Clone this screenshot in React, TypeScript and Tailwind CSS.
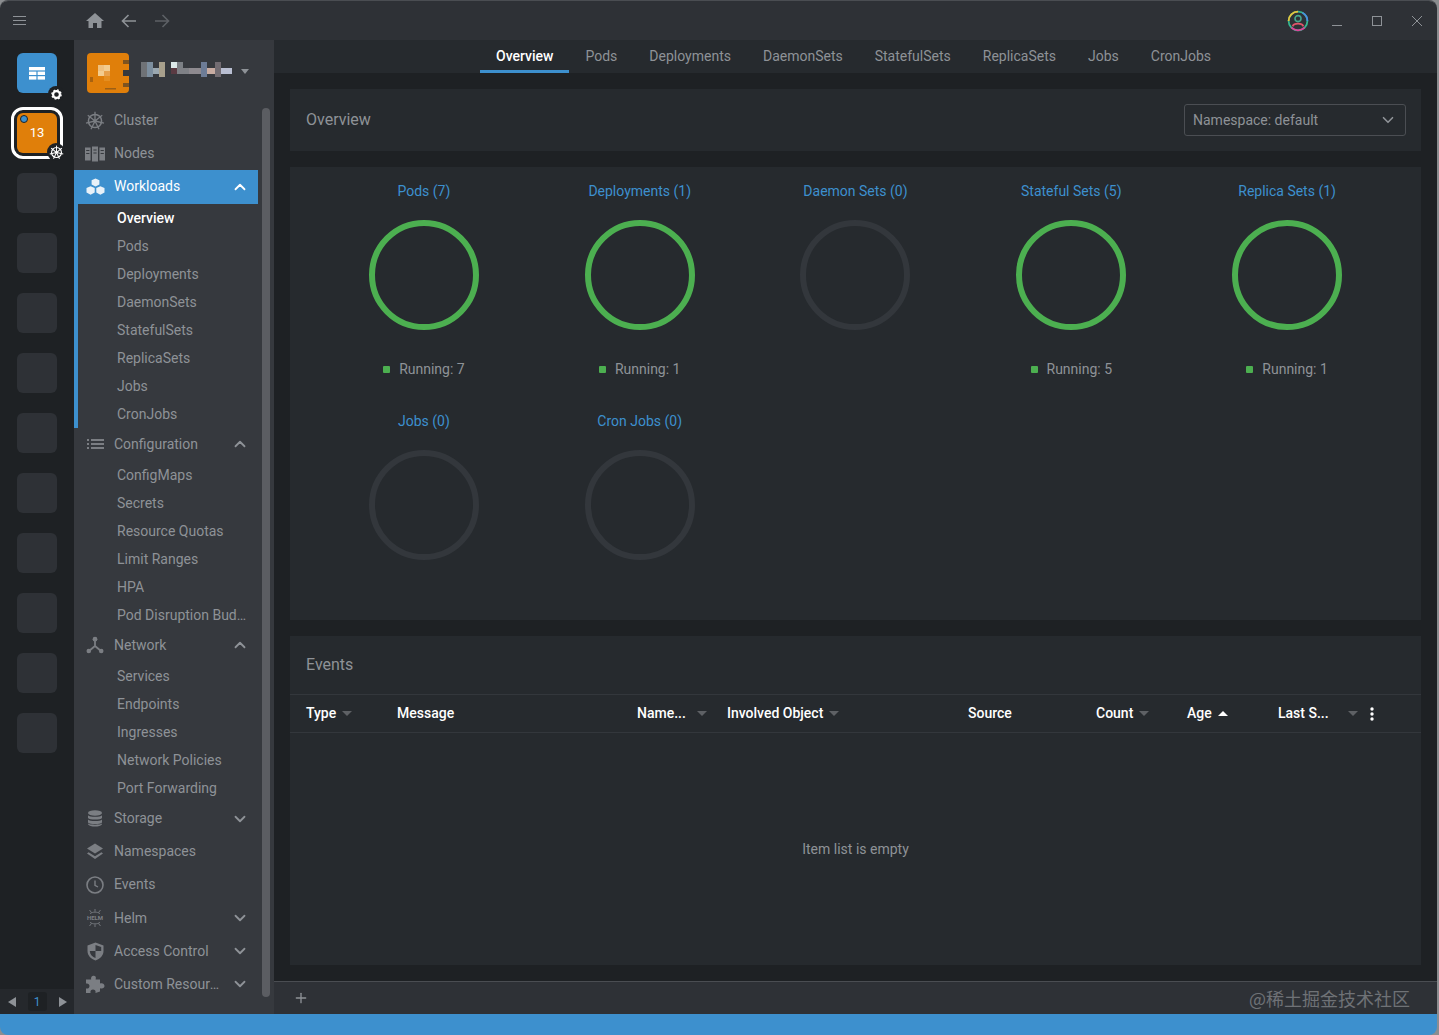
import { ChevronDown, ChevronUp, Plus } from "lucide-react";
import type { ReactNode } from "react";

const tabs = ["Overview", "Pods", "Deployments", "DaemonSets", "StatefulSets", "ReplicaSets", "Jobs", "CronJobs"];

const charts = [
  { title: "Pods (7)", running: 7 },
  { title: "Deployments (1)", running: 1 },
  { title: "Daemon Sets (0)", running: 0 },
  { title: "Stateful Sets (5)", running: 5 },
  { title: "Replica Sets (1)", running: 1 },
  { title: "Jobs (0)", running: 0 },
  { title: "Cron Jobs (0)", running: 0 },
];

const workloads = ["Overview", "Pods", "Deployments", "DaemonSets", "StatefulSets", "ReplicaSets", "Jobs", "CronJobs"];
const config = ["ConfigMaps", "Secrets", "Resource Quotas", "Limit Ranges", "HPA", "Pod Disruption Budgets"];
const network = ["Services", "Endpoints", "Ingresses", "Network Policies", "Port Forwarding"];

const columns = [
  { label: "Type", width: "w-[91px]", sort: "down" },
  { label: "Message", width: "w-[240px]" },
  { label: "Name...", width: "w-[90px]", sort: "down", wide: true },
  { label: "Involved Object", width: "w-[241px]", sort: "down" },
  { label: "Source", width: "w-[128px]" },
  { label: "Count", width: "w-[91px]", sort: "down" },
  { label: "Age", width: "w-[91px]", sort: "up" },
  { label: "Last S...", width: "w-[100px]", sort: "down", wide: true },
];

function HelmWheel({ size = 20, color = "#7b7e83" }: { size?: number; color?: string }) {
  const spokes = [0, 51.4, 102.8, 154.2, 205.7, 257.1, 308.5];
  return (
    <svg width={size} height={size} viewBox="0 0 20 20" fill="none" stroke={color}>
      <circle cx="10" cy="10" r="6.6" strokeWidth="1.5" />
      <circle cx="10" cy="10" r="1.7" fill={color} stroke="none" />
      {spokes.map((a) => (
        <line key={a} x1="10" y1="10" x2="10" y2="0.8" strokeWidth="1.3" transform={`rotate(${a} 10 10)`} />
      ))}
    </svg>
  );
}

function NodesIcon() {
  return (
    <svg width="20" height="16" viewBox="0 0 20 16" fill="#7b7e83">
      <rect x="0" y="1.5" width="5.6" height="13" />
      <rect x="7" y="0.5" width="6" height="15" />
      <rect x="14.4" y="1.5" width="5.6" height="13" />
      <g fill="#36393e">
        <rect x="1.2" y="4" width="3.2" height="1" />
        <rect x="1.2" y="7" width="3.2" height="1" />
        <rect x="8.4" y="3.5" width="3.2" height="1" />
        <rect x="8.4" y="6.5" width="3.2" height="1" />
        <rect x="15.6" y="4" width="3.2" height="1" />
        <rect x="15.6" y="7" width="3.2" height="1" />
      </g>
    </svg>
  );
}

function CubesIcon() {
  return (
    <svg width="19" height="18" viewBox="0 0 19 18" fill="#e8f1f8">
      <path d="M9.5 0.5 13.4 2.2 13.4 6.6 9.5 8.4 5.6 6.6 5.6 2.2Z" />
      <path d="M4.6 8.2 8.7 10 8.7 14.6 4.6 16.8 0.5 14.6 0.5 10Z" />
      <path d="M14.4 8.2 18.5 10 18.5 14.6 14.4 16.8 10.3 14.6 10.3 10Z" />
    </svg>
  );
}

function ListIcon() {
  return (
    <svg width="17" height="10" viewBox="0 0 17 10" fill="#7b7e83">
      <rect x="0" y="0" width="2" height="2" />
      <rect x="0" y="4" width="2" height="2" />
      <rect x="0" y="8" width="2" height="2" />
      <rect x="4" y="0" width="13" height="2" />
      <rect x="4" y="4" width="13" height="2" />
      <rect x="4" y="8" width="13" height="2" />
    </svg>
  );
}

function NetworkIcon() {
  return (
    <svg width="18" height="18" viewBox="0 0 18 18" fill="#7b7e83" stroke="#7b7e83">
      <circle cx="9" cy="3.2" r="2.4" stroke="none" />
      <circle cx="2.8" cy="15" r="2.3" stroke="none" />
      <circle cx="15.2" cy="15" r="2.3" stroke="none" />
      <path d="M9 4 9 10 3 15M9 10 15 15" strokeWidth="1.8" fill="none" />
    </svg>
  );
}

function StorageIcon() {
  return (
    <svg width="16" height="17" viewBox="0 0 16 17" fill="#7b7e83">
      <ellipse cx="8" cy="3" rx="7" ry="2.7" />
      <path d="M1 5.2C2.5 7.2 13.5 7.2 15 5.2V8C13.5 10 2.5 10 1 8Z" />
      <path d="M1 9.6C2.5 11.6 13.5 11.6 15 9.6V12.4C13.5 14.4 2.5 14.4 1 12.4Z" />
      <path d="M1 13.6C2.5 15.2 13.5 15.2 15 13.6V14.2C13.5 17.4 2.5 17.4 1 14.2Z" />
    </svg>
  );
}

function LayersIcon() {
  return (
    <svg width="18" height="17" viewBox="0 0 18 17" fill="#7b7e83">
      <path d="M9 0.5 17 5.5 9 10.5 1 5.5Z" />
      <path d="M2.6 9.2 9 13.2 15.4 9.2 17 10.5 9 16 1 10.5Z" />
    </svg>
  );
}

function ClockIcon() {
  return (
    <svg width="18" height="18" viewBox="0 0 18 18" fill="none" stroke="#7b7e83">
      <circle cx="9" cy="9" r="8" strokeWidth="1.6" />
      <path d="M9 4.5V9.4L12 11" strokeWidth="1.4" />
    </svg>
  );
}

function HelmIcon() {
  return (
    <svg width="20" height="20" viewBox="0 0 20 20" fill="none" stroke="#7b7e83" strokeWidth="0.9">
      <path d="M4.5 2 6.5 4.5M10 1V3.6M15.5 2 13.5 4.5M5 5.6C8 3.6 12 3.6 15 5.6" />
      <path d="M4.5 18 6.5 15.5M10 19V16.4M15.5 18 13.5 15.5M5 14.4C8 16.4 12 16.4 15 14.4" />
      <text x="10" y="12" textAnchor="middle" fontSize="6" fontWeight="700" fontFamily="Roboto, sans-serif" fill="#7b7e83" stroke="none">
        HELM
      </text>
    </svg>
  );
}

function ShieldIcon() {
  return (
    <svg width="17" height="19" viewBox="0 0 17 19" fill="#7b7e83">
      <path d="M8.5 0.5 16.5 3.5V9C16.5 13.5 13 17 8.5 18.5 4 17 0.5 13.5 0.5 9V3.5ZM8.5 3V9H14.2V4.9ZM8.5 9H2.8C3 12.4 5.4 15 8.5 16Z" fillRule="evenodd" />
    </svg>
  );
}

function PuzzleIcon() {
  return (
    <svg width="20" height="19" viewBox="0 0 20 19" fill="#7b7e83">
      <path d="M7.5 1C9.5 0 11.4 1.4 10.8 3.6L10.6 4.4H15V8.6C17.4 7.6 19.5 9 19.5 11S17.4 14.2 15 13.2V16.5L10.5 18C11 15.6 9.5 14.6 8 14.6S5 15.6 5.5 18H1V13.5C3 14 4.5 12.8 4.5 11S3 8 1 8.5V4.4H6.2C5.8 3 6.2 1.6 7.5 1Z" />
    </svg>
  );
}

function TopRow({
  icon,
  label,
  open,
  active,
}: {
  icon: ReactNode;
  label: string;
  open?: boolean;
  active?: boolean;
}) {
  return (
    <div className={`flex h-[33.2px] items-center ${active ? "bg-[#3d90ce] text-white" : "text-[#8e9297]"}`}>
      <div className="flex w-[40px] shrink-0 justify-center pl-[2px]">{icon}</div>
      <span className="min-w-0 flex-1 truncate">{label}</span>
      {open === undefined ? null : open ? (
        <ChevronUp size={18} strokeWidth={2.4} className={`mr-[9px] ml-[6px] shrink-0 ${active ? "text-white" : "text-[#8e9297]"}`} />
      ) : (
        <ChevronDown size={18} strokeWidth={2.4} className="mr-[9px] ml-[6px] shrink-0 text-[#8e9297]" />
      )}
    </div>
  );
}

function SubRow({ label, active }: { label: string; active?: boolean }) {
  return (
    <div className={`h-[28px] truncate pr-[10px] pl-[43px] leading-[28px] ${active ? "font-medium text-white" : "text-[#8e9297]"}`}>
      {label}
    </div>
  );
}

function Sidebar() {
  return (
    <aside className="relative flex w-[200px] shrink-0 flex-col bg-[#36393e] text-[14px]">
      <div className="flex h-[64px] shrink-0 items-start pt-[13px] pl-[13px]">
        <svg width="42" height="40" viewBox="0 0 42 40">
          <rect width="42" height="40" rx="4" fill="#e07f0a" />
          <rect x="11" y="12" width="6" height="6" fill="#efc07e" />
          <rect x="17" y="12" width="6" height="6" fill="#f3cc8e" />
          <rect x="11" y="18" width="6" height="5" fill="#f3cc8e" />
          <rect x="17" y="18" width="6" height="5" fill="#e8a04a" />
          <rect x="17" y="23" width="6" height="5" fill="#e58e20" />
          <rect x="3" y="24" width="3" height="5" fill="#a9620f" />
          <rect x="36" y="7" width="6" height="4" fill="#7d5320" />
          <rect x="36" y="17" width="6" height="6" fill="#36393e" />
          <rect x="36" y="30" width="6" height="4" fill="#7d5320" />
          <rect x="18" y="35" width="11" height="1.5" fill="#9c5f15" />
        </svg>
        <svg width="94" height="20" viewBox="0 0 94 20" className="mt-[9px] ml-[12px]">
          <rect x="0" y="0" width="6" height="15" fill="#6f7276" />
          <rect x="6" y="0" width="6" height="15" fill="#7c8e9e" />
          <rect x="12" y="6" width="6" height="6" fill="#9aa7b0" />
          <rect x="18" y="0" width="6" height="15" fill="#a8a08c" />
          <rect x="30" y="0" width="6" height="6" fill="#dce9e9" />
          <rect x="36" y="0" width="6" height="6" fill="#7c8085" />
          <rect x="30" y="6" width="6" height="6" fill="#5a3a42" />
          <rect x="36" y="6" width="12" height="6" fill="#7f8186" />
          <rect x="48" y="6" width="12" height="6" fill="#8e8a8f" />
          <rect x="60" y="0" width="6" height="15" fill="#6d7c96" />
          <rect x="66" y="6" width="8" height="6" fill="#c8aca2" />
          <rect x="74" y="0" width="6" height="15" fill="#726c72" />
          <rect x="80" y="6" width="11" height="6" fill="#b9bfd2" />
        </svg>
        <div className="mt-[16px] ml-[6px] h-0 w-0 border-x-[4.5px] border-t-[5px] border-x-transparent border-t-[#8e9297]" />
      </div>

      <div className="w-[184px] min-h-0 flex-1 overflow-hidden">
        <TopRow icon={<HelmWheel />} label="Cluster" />
        <TopRow icon={<NodesIcon />} label="Nodes" />
        <TopRow icon={<CubesIcon />} label="Workloads" open active />
        <div className="border-l-4 border-[#3d90ce] -ml-0">
          {workloads.map((w, i) => (
            <div key={w} className="-ml-[4px]">
              <SubRow label={w} active={i === 0} />
            </div>
          ))}
        </div>
        <TopRow icon={<ListIcon />} label="Configuration" open />
        {config.map((c) => (
          <SubRow key={c} label={c} />
        ))}
        <TopRow icon={<NetworkIcon />} label="Network" open />
        {network.map((n) => (
          <SubRow key={n} label={n} />
        ))}
        <TopRow icon={<StorageIcon />} label="Storage" open={false} />
        <TopRow icon={<LayersIcon />} label="Namespaces" />
        <TopRow icon={<ClockIcon />} label="Events" />
        <TopRow icon={<HelmIcon />} label="Helm" open={false} />
        <TopRow icon={<ShieldIcon />} label="Access Control" open={false} />
        <TopRow icon={<PuzzleIcon />} label="Custom Resources" open={false} />
      </div>

      {/* scrollbar thumb */}
      <div className="absolute top-[68px] right-[4px] bottom-[17px] w-[8px] rounded-[4px] bg-[#5b5d62]" />
    </aside>
  );
}

function Rail() {
  const empties = Array.from({ length: 10 }, (_, i) => i);
  return (
    <nav className="flex w-[74px] shrink-0 flex-col bg-[#1e2124]">
      <div className="flex min-h-0 flex-1 flex-col items-center gap-[20px] pt-[13px]">
        <div className="relative flex h-[40px] w-[40px] items-center justify-center rounded-[6px] bg-[#3d90ce]">
          <svg width="16" height="13" viewBox="0 0 16 13" fill="#fff">
            <rect width="16" height="3.4" />
            <rect y="4.6" width="7.4" height="3.4" />
            <rect x="8.6" y="4.6" width="7.4" height="3.4" />
            <rect y="9.2" width="7.4" height="3.4" />
            <rect x="8.6" y="9.2" width="7.4" height="3.4" />
          </svg>
          <div className="absolute -right-[7px] -bottom-[9px] flex h-[16px] w-[16px] items-center justify-center rounded-full bg-[#1e2124]">
            <svg width="11" height="11" viewBox="0 0 11 11">
              <circle cx="5.5" cy="5.5" r="3.4" fill="none" stroke="#fff" strokeWidth="2.2" />
              <circle cx="5.5" cy="5.5" r="4.6" fill="none" stroke="#fff" strokeWidth="1.4" strokeDasharray="1.8 1.8" />
            </svg>
          </div>
        </div>
        <div className="relative flex h-[40px] w-[40px] items-center justify-center rounded-[6px] bg-[#e07f0a] text-[13px] text-white outline-[3px] outline-offset-[3px] outline-white">
          <div className="absolute top-[2px] left-[3px] h-[8px] w-[8px] rounded-full border border-[#1e2124] bg-[#3d90ce]" />
          13
          <div className="absolute -right-[8px] -bottom-[8px] flex h-[18px] w-[18px] items-center justify-center rounded-full bg-[#1e2124]">
            <HelmWheel size={15} color="#ffffff" />
          </div>
        </div>
        {empties.map((i) => (
          <div key={i} className="h-[40px] w-[40px] shrink-0 rounded-[6px] bg-[#2e3136]" />
        ))}
      </div>
      <div className="flex h-[25px] shrink-0 items-center justify-center gap-[12px] bg-[#25282c]">
        <div className="h-0 w-0 border-y-[5px] border-r-[8px] border-y-transparent border-r-[#8e9297]" />
        <div className="flex h-[19px] w-[19px] items-center justify-center rounded-[3px] bg-[#1e2124] text-[12px] text-[#3d90ce]">1</div>
        <div className="h-0 w-0 border-y-[5px] border-l-[8px] border-y-transparent border-l-[#8e9297]" />
      </div>
    </nav>
  );
}

function Ring({ active }: { active: boolean }) {
  return (
    <svg width="110" height="110" viewBox="0 0 110 110" fill="none">
      <circle cx="55" cy="55" r="52" stroke={active ? "#4caf50" : "#33373c"} strokeWidth="6" />
    </svg>
  );
}

function Chart({ title, running }: { title: string; running: number }) {
  return (
    <div className="flex h-[230px] flex-col items-center pt-[14px]">
      <div className="leading-[20px] text-[#3d90ce]">{title}</div>
      <div className="mt-[19px]">
        <Ring active={running > 0} />
      </div>
      {running > 0 ? (
        <div className="mt-[29px] flex items-center gap-[9px] leading-[20px] text-[#8e9297]">
          <span className="h-[7px] w-[7px] rounded-[1px] bg-[#4caf50]" />
          Running: {running}
        </div>
      ) : null}
    </div>
  );
}

function SortArrow({ dir }: { dir?: string }) {
  if (dir === "up") {
    return <span className="ml-[6px] h-0 w-0 border-x-[5px] border-b-[5px] border-x-transparent border-b-white" />;
  }
  return <span className="ml-[6px] h-0 w-0 border-x-[5px] border-t-[5px] border-x-transparent border-t-[#5e6165]" />;
}

export default function App() {
  return (
    <div className="relative h-[1035px] w-[1439px] overflow-hidden bg-[#8b8d90] font-['Roboto',sans-serif] text-[14px]">
      <div className="flex h-[1035px] w-[1437px] flex-col overflow-hidden rounded-[8px] border-t border-[#4a4d52]">
        {/* title bar */}
        <header className="flex h-[39px] shrink-0 items-center bg-[#2e3136] text-[#8e9297]">
          <svg width="13" height="9" viewBox="0 0 13 9" stroke="#8e9297" className="ml-[13px]">
            <path d="M0 0.5H13M0 4.5H13M0 8.5H13" />
          </svg>
          <svg width="18" height="15" viewBox="0 0 18 15" fill="#8e9297" className="ml-[60px]">
            <path d="M9 0 18 8H15.5V15H11V10H7V15H2.5V8H0Z" />
          </svg>
          <svg width="16" height="14" viewBox="0 0 16 14" fill="none" stroke="#8e9297" strokeWidth="1.6" className="ml-[17px]">
            <path d="M15 7H1.5M7.5 1 1.5 7 7.5 13" />
          </svg>
          <svg width="16" height="14" viewBox="0 0 16 14" fill="none" stroke="#5d6065" strokeWidth="1.6" className="ml-[17px]">
            <path d="M1 7H14.5M8.5 1 14.5 7 8.5 13" />
          </svg>
          <div className="flex-1" />
          <svg width="22" height="22" viewBox="0 0 22 22" fill="none" className="mr-[23px]">
            <circle cx="11" cy="11" r="9.4" stroke="#35b58f" strokeWidth="1.8" />
            <path d="M11 1.6A9.4 9.4 0 0 0 1.6 11" stroke="#e8c33a" strokeWidth="1.8" />
            <path d="M4.4 17.6A9.4 9.4 0 0 0 17.6 17.6" stroke="#e0409a" strokeWidth="1.8" />
            <path d="M20.4 11A9.4 9.4 0 0 0 15.5 2.8" stroke="#4a8fe0" strokeWidth="1.8" />
            <circle cx="11" cy="8.6" r="3" stroke="#46a58c" strokeWidth="1.6" />
            <path d="M5.6 16.4C7 12.8 15 12.8 16.4 16.4" stroke="#e0556a" strokeWidth="1.8" />
          </svg>
          <svg width="10" height="10" viewBox="0 0 10 10" stroke="#8e9297" className="mr-[30px]">
            <path d="M0 9.5H10" />
          </svg>
          <svg width="10" height="10" viewBox="0 0 10 10" fill="none" stroke="#8e9297" className="mr-[30px]">
            <rect x="0.5" y="0.5" width="9" height="9" />
          </svg>
          <svg width="10" height="10" viewBox="0 0 10 10" stroke="#8e9297" className="mr-[15px]">
            <path d="M0 0 10 10M10 0 0 10" />
          </svg>
        </header>

        <div className="flex min-h-0 flex-1">
          <Rail />
          <Sidebar />

          <main className="flex min-w-0 flex-1 flex-col bg-[#1e2124]">
            <div className="flex h-[33px] shrink-0 justify-center bg-[#262a2e] pr-[4px]">
              {tabs.map((t, i) => (
                <div
                  key={t}
                  className={`flex h-full items-center px-[16px] ${i === 0 ? "border-b-[3px] border-[#3d90ce] pt-[3px] font-medium text-white" : "text-[#8e9297]"}`}
                >
                  {t}
                </div>
              ))}
            </div>

            <div className="flex min-h-0 flex-1 flex-col gap-[16px] px-[16px] pt-[16px]">
              <section className="flex h-[62px] shrink-0 items-center justify-between bg-[#262a2e] pr-[15px] pl-[16px]">
                <h2 className="text-[16px] text-[#8e9297]">Overview</h2>
                <div className="flex h-[32px] w-[222px] items-center justify-between rounded-[3px] border border-[#4b4e53] pr-[8px] pl-[8px] text-[#8e9297]">
                  Namespace: default
                  <ChevronDown size={18} strokeWidth={2.2} />
                </div>
              </section>

              <section className="grid h-[453px] shrink-0 grid-cols-5 content-start bg-[#262a2e] px-[26px] pt-[0px] pb-[0px]">
                {charts.map((c) => (
                  <Chart key={c.title} title={c.title} running={c.running} />
                ))}
              </section>

              <section className="flex h-[329px] shrink-0 flex-col bg-[#262a2e]">
                <h2 className="flex h-[59px] shrink-0 items-center border-b border-[#33373c] pl-[16px] text-[16px] text-[#8e9297]">Events</h2>
                <div className="flex h-[38px] shrink-0 items-center border-b border-[#33373c] pl-[16px] font-medium text-white">
                  {columns.map((c) => (
                    <div key={c.label} className={`flex shrink-0 items-center ${c.width} ${c.wide ? "justify-between pr-[20px]" : ""}`}>
                      <span>{c.label}</span>
                      {c.sort ? <SortArrow dir={c.sort} /> : null}
                    </div>
                  ))}
                  <svg width="4" height="14" viewBox="0 0 4 14" fill="#fff" className="ml-[-8px]">
                    <circle cx="2" cy="2" r="1.7" />
                    <circle cx="2" cy="7" r="1.7" />
                    <circle cx="2" cy="12" r="1.7" />
                  </svg>
                </div>
                <div className="flex flex-1 items-center justify-center text-[#8e9297]">Item list is empty</div>
              </section>
            </div>

            <div className="relative flex h-[33px] shrink-0 items-center border-t border-[#4a4d52] bg-[#2e3136] pl-[19px] text-[#8e9297]">
              <Plus size={16} strokeWidth={2} />
              <span className="ml-auto mr-[27px] font-['Noto_Sans_CJK_SC','Roboto',sans-serif] text-[18px] text-[#6f7276]">@稀土掘金技术社区</span>
            </div>
          </main>
        </div>

        <footer className="h-[21px] shrink-0 bg-[#3d90ce]" />
      </div>
    </div>
  );
}
